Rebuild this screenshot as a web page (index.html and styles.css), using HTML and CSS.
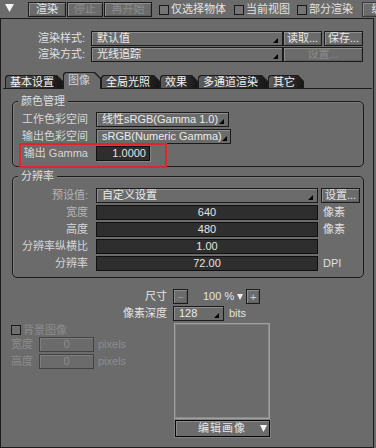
FILE: index.html
```html
<!DOCTYPE html>
<html lang="zh-CN">
<head>
  <meta charset="UTF-8" />
  <meta name="viewport" content="width=device-width, initial-scale=1.0"/>
  <title>渲染设置</title>
  <link rel="stylesheet" href="styles.css">
</head>
<body>
  <div class="toolbar">
    <svg class="menu-arrow" width="9" height="8" viewBox="0 0 9 8"><polygon points="0,0 9,0 4.5,8" fill="#f2f2f2"/></svg>
    <button class="btn btn-render">渲染</button>
    <button class="btn btn-stop" disabled>停止</button>
    <button class="btn btn-restart" disabled>再开始</button>
    <label class="check check-sel"><span class="box"></span>仅选择物体</label>
    <label class="check check-view"><span class="box"></span>当前视图</label>
    <label class="check check-part"><span class="box"></span>部分渲染</label>
    <button class="btn btn-edit">编</button>
  </div>

  <div class="panel">
    <div class="render-opts">
      <div class="row">
        <span class="label">渲染样式:</span>
        <div class="select select-style"><span>默认值</span><i class="arrow"></i></div>
        <button class="btn btn-load">读取...</button>
        <button class="btn btn-save">保存...</button>
      </div>
      <div class="row">
        <span class="label">渲染方式:</span>
        <div class="select select-style"><span>光线追踪</span><i class="arrow"></i></div>
        <button class="btn btn-setup" disabled>设置...</button>
      </div>
    </div>

    <!-- tabs -->
    <div class="tabs">
      <div class="tab tab-basic"><span>基本设置</span></div>
      <div class="tab tab-image active"><span>图像</span></div>
      <div class="tab tab-gi"><span>全局光照</span></div>
      <div class="tab tab-fx"><span>效果</span></div>
      <div class="tab tab-pass"><span>多通道渲染</span></div>
      <div class="tab tab-misc"><span>其它</span></div>
    </div>

    <fieldset class="group group-color">
      <legend>颜色管理</legend>
      <div class="rows">
        <div class="row">
          <span class="label">工作色彩空间</span>
          <div class="select select-work"><span>线性sRGB(Gamma 1.0)</span><i class="arrow"></i></div>
        </div>
        <div class="row">
          <span class="label">输出色彩空间</span>
          <div class="select select-out"><span>sRGB(Numeric Gamma)</span><i class="arrow"></i></div>
        </div>
        <div class="row gamma-row">
          <span class="label">输出 Gamma</span>
          <div class="field field-gamma">1.0000</div>
        </div>
      </div>
    </fieldset>

    <fieldset class="group group-res">
      <legend>分辨率</legend>
      <div class="rows">
        <div class="row">
          <span class="label dim">预设值:</span>
          <div class="select select-preset"><span>自定义设置</span><i class="arrow"></i></div>
          <button class="btn btn-preset">设置...</button>
        </div>
        <div class="row">
          <span class="label dim">宽度</span>
          <div class="field field-wide">640</div>
          <span class="unit">像素</span>
        </div>
        <div class="row">
          <span class="label">高度</span>
          <div class="field field-wide">480</div>
          <span class="unit">像素</span>
        </div>
        <div class="row">
          <span class="label">分辨率纵横比</span>
          <div class="field field-wide">1.00</div>
        </div>
        <div class="row">
          <span class="label">分辨率</span>
          <div class="field field-wide">72.00</div>
          <span class="unit">DPI</span>
        </div>
      </div>
    </fieldset>

    <div class="preview-opts">
      <div class="row">
        <span class="label">尺寸</span>
        <button class="btn btn-step minus">−</button>
        <span class="zoom-val">100 %</span>
        <svg class="zoom-arrow" width="6" height="6" viewBox="0 0 6 6"><polygon points="0,0 6,0 3,6" fill="#f0f0f0"/></svg>
        <button class="btn btn-step plus">+</button>
      </div>
      <div class="row">
        <span class="label">像素深度</span>
        <div class="select select-depth"><span>128</span><i class="arrow"></i></div>
        <span class="unit">bits</span>
      </div>
    </div>

    <div class="lower">
      <div class="bg-image">
        <label class="check check-bg"><span class="box"></span>背景图像</label>
        <div class="row">
          <span class="label">宽度</span>
          <div class="field field-off">0</div>
          <span class="unit">pixels</span>
        </div>
        <div class="row">
          <span class="label">高度</span>
          <div class="field field-off">0</div>
          <span class="unit">pixels</span>
        </div>
      </div>
      <div class="preview">
        <div class="preview-box"></div>
        <div class="edit-menu">
          <span>编辑画像</span>
          <svg width="7" height="7" viewBox="0 0 7 7"><polygon points="0,0 7,0 3.5,7" fill="#f4f4f4"/></svg>
        </div>
      </div>
    </div>
  </div>
</body>
</html>
```

FILE: styles.css
```css
* {
  box-sizing: border-box;
  margin: 0;
  padding: 0;
}

body {
  background: #6b6b6b;
  color: #dcdcdc;
  font: 11px/15px "Liberation Sans", "Noto Sans CJK SC", sans-serif;
  width: 376px;
  height: 448px;
  overflow: hidden;
}

.row {
  display: flex;
  align-items: center;
  height: 15px;
}

/* generic button */
.btn {
  height: 15px;
  font: inherit;
  line-height: 13px;
  color: #e6e6e6;
  background: #6b6b6b;
  border: 1px solid #1c1c1c;
  box-shadow: inset 1px 1px 0 #8e8e8e, inset -1px -1px 0 #5e5e5e;
  text-align: center;
}

.btn:disabled {
  color: #8c8c8c;
}

/* top toolbar */
.toolbar {
  display: flex;
  align-items: flex-start;
  height: 18px;
  overflow: hidden;
  white-space: nowrap;
}

.menu-arrow {
  margin: 4px 0 0 5px;
  flex-shrink: 0;
}

.toolbar .btn { margin-top: 2px; flex-shrink: 0; }
.btn-render { margin-left: 14px; width: 38px; }
.btn-stop { margin-left: 1px; width: 36px; }
.btn-restart { margin-left: 1px; width: 48px; }
.btn-edit { margin-left: 9px; width: 30px; border-color: #3a3a3a; }

.check {
  display: flex;
  align-items: center;
  gap: 2px;
  color: #e2e2e2;
  height: 15px;
  flex-shrink: 0;
}

.toolbar .check { margin-top: 2px; }
.check-sel { margin-left: 7px; }
.check-view { margin-left: 8px; }
.check-part { margin-left: 7px; }

.check .box {
  width: 10px;
  height: 10px;
  background: #747474;
  border: 1px solid #1a1a1a;
}

/* main panel */
.panel {
  width: 374px;
  height: 430px;
  border: 1px solid #1c1c1c;
}

.render-opts {
  padding-top: 12px;
}

.render-opts .row + .row { margin-top: 1px; }

.render-opts .label {
  width: 90px;
  padding-right: 6px;
  text-align: right;
  color: #e0e0e0;
}

.select {
  display: flex;
  align-items: center;
  height: 15px;
  padding: 0 4px 0 5px;
  color: #ececec;
  background: #6b6b6b;
  border: 1px solid #1a1a1a;
  box-shadow: inset 1px 1px 0 #8e8e8e;
  white-space: nowrap;
  overflow: hidden;
}

.select .arrow {
  margin-left: auto;
  margin-top: 4px;
  flex-shrink: 0;
  width: 0;
  height: 0;
  border-left: 5px solid transparent;
  border-bottom: 5px solid #050505;
}

.select-style { width: 192px; }
.btn-load { width: 39px; }
.btn-save { width: 39px; margin-left: 2px; }
.btn-setup { width: 80px; }

/* tabs */
.tabs {
  display: flex;
  align-items: flex-end;
  height: 17px;
  margin: 10px 1px 0 2px;
  padding-left: 2px;
  border-bottom: 1px solid #1c1c1c;
}

.tab {
  height: 13px;
  padding: 1px 1px 0 1px;
  background: #1c1c1c;
  clip-path: polygon(0 2px, 2px 0, calc(100% - 6px) 0, 100% 6px, 100% 100%, 0 100%);
}

.tab span {
  display: block;
  height: 100%;
  padding-left: 4px;
  line-height: 12px;
  color: #f2f2f2;
  background: linear-gradient(100deg, #5e5e5e 0%, #333 55%, #161616 100%);
  clip-path: polygon(0 2px, 2px 0, calc(100% - 6px) 0, 100% 6px, 100% 100%, 0 100%);
}

.tab.active {
  height: 17px;
  margin-bottom: -1px;
}

.tab.active span {
  background: #6b6b6b;
  color: #d2d2d2;
  line-height: 15px;
}

.tab-basic { width: 58px; }
.tab-image { width: 38px; }
.tab-gi { width: 59px; }
.tab-fx { width: 38px; }
.tab-pass { width: 70px; }
.tab-misc { width: 36px; }

/* group boxes */
.group {
  margin: 5px 9px 0 11px;
  padding: 0;
  border: 1px solid #1c1c1c;
  border-radius: 5px;
  box-shadow: inset 1px 1px 0 #7e7e7e;
}

.group legend {
  margin-left: 5px;
  padding: 0 3px;
  line-height: 15px;
  color: #dedede;
  background: #6b6b6b;
}

.group-color .rows { padding: 3px 0 5px; }
.group-res { margin-top: 2px; }
.group-res .rows { padding: 4px 0 6px; }

.group .row + .row { margin-top: 2px; }

.group .label {
  width: 83px;
  padding-right: 8px;
  text-align: right;
  color: #d6d6d6;
  white-space: nowrap;
}

.group .label.dim { color: #b4b4b4; }

.select-work { width: 133px; }
.select-out { width: 135px; }
.select-preset { width: 222px; }
.btn-preset { width: 39px; margin-left: 3px; }

.field {
  height: 15px;
  line-height: 13px;
  color: #e4e4e4;
  background: #2e2e2e;
  border: 1px solid #101010;
  text-align: center;
}

.field-gamma {
  width: 54px;
  padding-right: 3px;
  text-align: right;
  box-shadow: 1px 1px 0 #858585;
}

.field-wide { width: 222px; }

.unit {
  margin-left: 5px;
  color: #e0e0e0;
}

/* red highlight around the gamma row */
.gamma-row { position: relative; }

.gamma-row::after {
  content: "";
  position: absolute;
  left: 6px;
  top: -3px;
  width: 144px;
  height: 21px;
  border: 2px solid #e2252b;
}

/* preview size / depth */
.preview-opts {
  margin-top: 11px;
}

.preview-opts .row + .row { margin-top: 2px; }

.preview-opts .label {
  width: 172px;
  padding-right: 6px;
  text-align: right;
  color: #e4e4e4;
}

.btn-step {
  width: 15px;
  line-height: 12px;
}

.btn-step.minus { color: #9a9a9a; }
.btn-step.plus { margin-left: 3px; width: 14px; color: #d0d0d0; }

.zoom-val {
  margin-left: 15px;
  color: #e4e4e4;
}

.zoom-arrow { margin-left: 3px; }

.select-depth { width: 51px; }

/* lower area: background image + preview */
.lower {
  display: flex;
  margin-top: 2px;
}

.bg-image {
  width: 173px;
  padding: 2px 0 0 10px;
  color: #8c8c8c;
}

.check-bg {
  height: 10px;
  color: #8c8c8c;
  gap: 2px;
}

.check-bg .box { border-color: #1a1a1a; background: #6e6e6e; }

.bg-image .row { margin-top: 2px; }
.bg-image .row + .row { margin-top: 2px; }

.bg-image .label {
  width: 28px;
  color: #8c8c8c;
}

.field-off {
  width: 55px;
  color: #8c8c8c;
  background: #6b6b6b;
  border-color: #434343;
  box-shadow: inset 1px 1px 0 #7e7e7e;
}

.bg-image .unit {
  margin-left: 4px;
  color: #8c8c8c;
}

.preview-box {
  width: 96px;
  height: 96px;
  border: 1px solid #a0a0a0;
  box-shadow: inset 1px 1px 0 #7c7c7c, inset -1px -1px 0 #8a8a8a;
}

.edit-menu {
  display: flex;
  align-items: center;
  width: 95px;
  height: 17px;
  margin: 1px 0 0 1px;
  padding: 0 2px 0 0;
  color: #e6e6e6;
  background: #6b6b6b;
  border: 1px solid #050505;
  box-shadow: 0 0 0 1px #808080, inset 1px 1px 0 #8c8c8c;
}

.edit-menu span {
  flex: 1;
  text-align: center;
  padding-left: 8px;
  letter-spacing: 1px;
}
```
